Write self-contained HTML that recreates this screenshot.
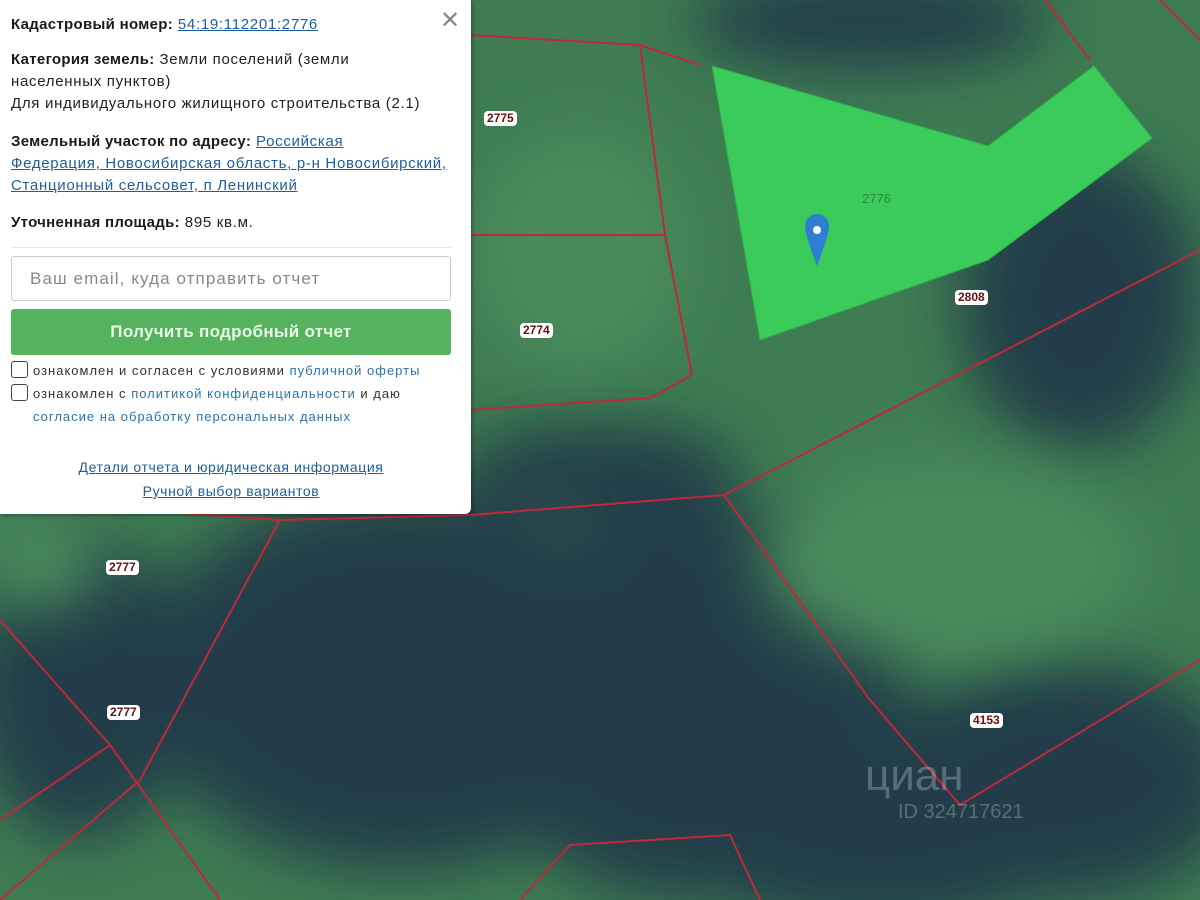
<!DOCTYPE html>
<html><head><meta charset="utf-8"><style>
*{margin:0;padding:0;box-sizing:border-box}
body{width:1200px;height:900px;overflow:hidden;position:relative;font-family:"Liberation Sans",sans-serif;background:#3d7a50}
svg.map{position:absolute;left:0;top:0}
.panel{position:absolute;left:0;top:0;width:471px;height:514px;background:#fff;border-radius:0 0 6px 0;box-shadow:1px 1px 4px rgba(0,0,0,.4);padding:0 11px;color:#222;font-size:15px}
.panel p{line-height:22px;white-space:nowrap;letter-spacing:0.7px}
.panel b{font-weight:bold;color:#1a1a1a;letter-spacing:0.3px}
a{color:#1d5fa0;text-decoration:underline}
.close{position:absolute;left:440px;top:6px;font-size:24px;color:#888;font-weight:300}
.inp{position:absolute;left:11px;top:256px;width:440px;height:45px;border:1px solid #ccc;border-radius:3px;padding:12px 18px;color:#888;font-size:17px;letter-spacing:1.1px}
.btn{position:absolute;left:11px;top:309px;width:440px;height:46px;background:#55b35e;border-radius:3px;color:#e9f8e6;font-size:17px;font-weight:bold;text-align:center;line-height:46px;letter-spacing:0.3px}
.cb{position:absolute;font-size:13px;color:#333;line-height:23px;white-space:nowrap;letter-spacing:1px}
.cb span.b{display:inline-block;width:17px;height:17px;border:1px solid #444;border-radius:3px;vertical-align:-3px;margin-right:5px}
.cb a{text-decoration:none;color:#2a73b0}
.lbl{position:absolute;background:#fff;color:#611;font-size:12px;font-weight:bold;padding:0 3px;border-radius:4px;line-height:15px}
</style></head><body>
<svg class="map" width="1200" height="900">
<defs><filter id="b"><feGaussianBlur stdDeviation="30"/></filter></defs>
<rect width="1200" height="900" fill="#3f7c52"/>
<g filter="url(#b)" fill="#223c48">
<ellipse cx="870" cy="20" rx="180" ry="50"/>
<ellipse cx="1080" cy="300" rx="120" ry="150"/>
<ellipse cx="600" cy="470" rx="140" ry="45"/>
<ellipse cx="400" cy="680" rx="260" ry="190"/>
<ellipse cx="690" cy="700" rx="220" ry="200"/>
<ellipse cx="80" cy="690" rx="110" ry="150"/>
<ellipse cx="1060" cy="780" rx="180" ry="120"/>
<ellipse cx="880" cy="860" rx="180" ry="70"/>
</g>
<g filter="url(#b)" fill="#4a8a5c"><ellipse cx="950" cy="560" rx="190" ry="100"/><ellipse cx="580" cy="250" rx="110" ry="120"/><ellipse cx="40" cy="560" rx="60" ry="50"/></g>
<polygon points="712,66 988,146 1094,66 1152,138 988,260 760,340" fill="#3acb5a" stroke="#2bb24c"/>
<g stroke="#c0283a" stroke-width="2" fill="none">
<polyline points="470,35 640,45 700,65"/>
<polyline points="640,45 665,235 470,235"/>
<polyline points="665,235 692,375 650,398 470,410"/>
<polyline points="1045,0 1090,60"/>
<polyline points="1160,0 1200,40"/>
<polyline points="1200,250 724,495 470,515 280,520 0,500"/>
<polyline points="724,495 870,700 960,805 1200,660"/>
<polyline points="280,520 140,780 0,900"/>
<polyline points="0,620 110,745 220,900"/>
<polyline points="110,745 0,820"/>
<polyline points="520,900 570,845 730,835 760,900"/>
</g>
<path d="M817 214a12 12 0 0 1 12 12c0 10-12 40-12 40s-12-30-12-40a12 12 0 0 1 12-12z" fill="#2f7fd0"/>
<circle cx="817" cy="230" r="4" fill="#fff"/>
<text x="862" y="203" font-size="13" fill="#2a8a40" font-family="Liberation Sans">2776</text>
<text x="865" y="790" font-size="44" fill="rgba(255,255,255,.25)" font-family="Liberation Sans">циан</text>
<text x="898" y="818" font-size="20" fill="rgba(255,255,255,.25)" font-family="Liberation Sans">ID 324717621</text>
</svg>
<div class="lbl" style="left:484px;top:111px">2775</div>
<div class="lbl" style="left:520px;top:323px">2774</div>
<div class="lbl" style="left:955px;top:290px">2808</div>
<div class="lbl" style="left:106px;top:560px">2777</div>
<div class="lbl" style="left:107px;top:705px">2777</div>
<div class="lbl" style="left:970px;top:713px">4153</div>
<div class="panel">
<div class="close">✕</div>
<p style="position:absolute;top:14px"><b>Кадастровый номер:</b> <a>54:19:112201:2776</a></p>
<p style="position:absolute;top:49px"><b>Категория земель:</b> Земли поселений (земли<br>населенных пунктов)<br>Для индивидуального жилищного строительства (2.1)</p>
<p style="position:absolute;top:131px"><b>Земельный участок по адресу:</b> <a>Российская</a><br><a>Федерация, Новосибирская область, р-н Новосибирский,</a><br><a>Станционный сельсовет, п Ленинский</a></p>
<p style="position:absolute;top:212px"><b>Уточненная площадь:</b> 895 кв.м.</p>
<div style="position:absolute;left:11px;top:247px;width:440px;border-top:1px solid #e6e6e6"></div>
<div class="inp">Ваш email, куда отправить отчет</div>
<div class="btn">Получить подробный отчет</div>
<div class="cb" style="left:11px;top:359px"><span class="b"></span>ознакомлен и согласен с условиями <a>публичной оферты</a></div>
<div class="cb" style="left:11px;top:382px;width:440px"><span class="b"></span>ознакомлен с <a>политикой конфиденциальности</a> и даю<br><a style="margin-left:22px">согласие на обработку персональных данных</a></div>
<div style="position:absolute;left:0;width:462px;top:455px;text-align:center;font-size:14px;line-height:24px;letter-spacing:0.6px"><a>Детали отчета и юридическая информация</a><br><a>Ручной выбор вариантов</a></div>
</div>
</body></html>
